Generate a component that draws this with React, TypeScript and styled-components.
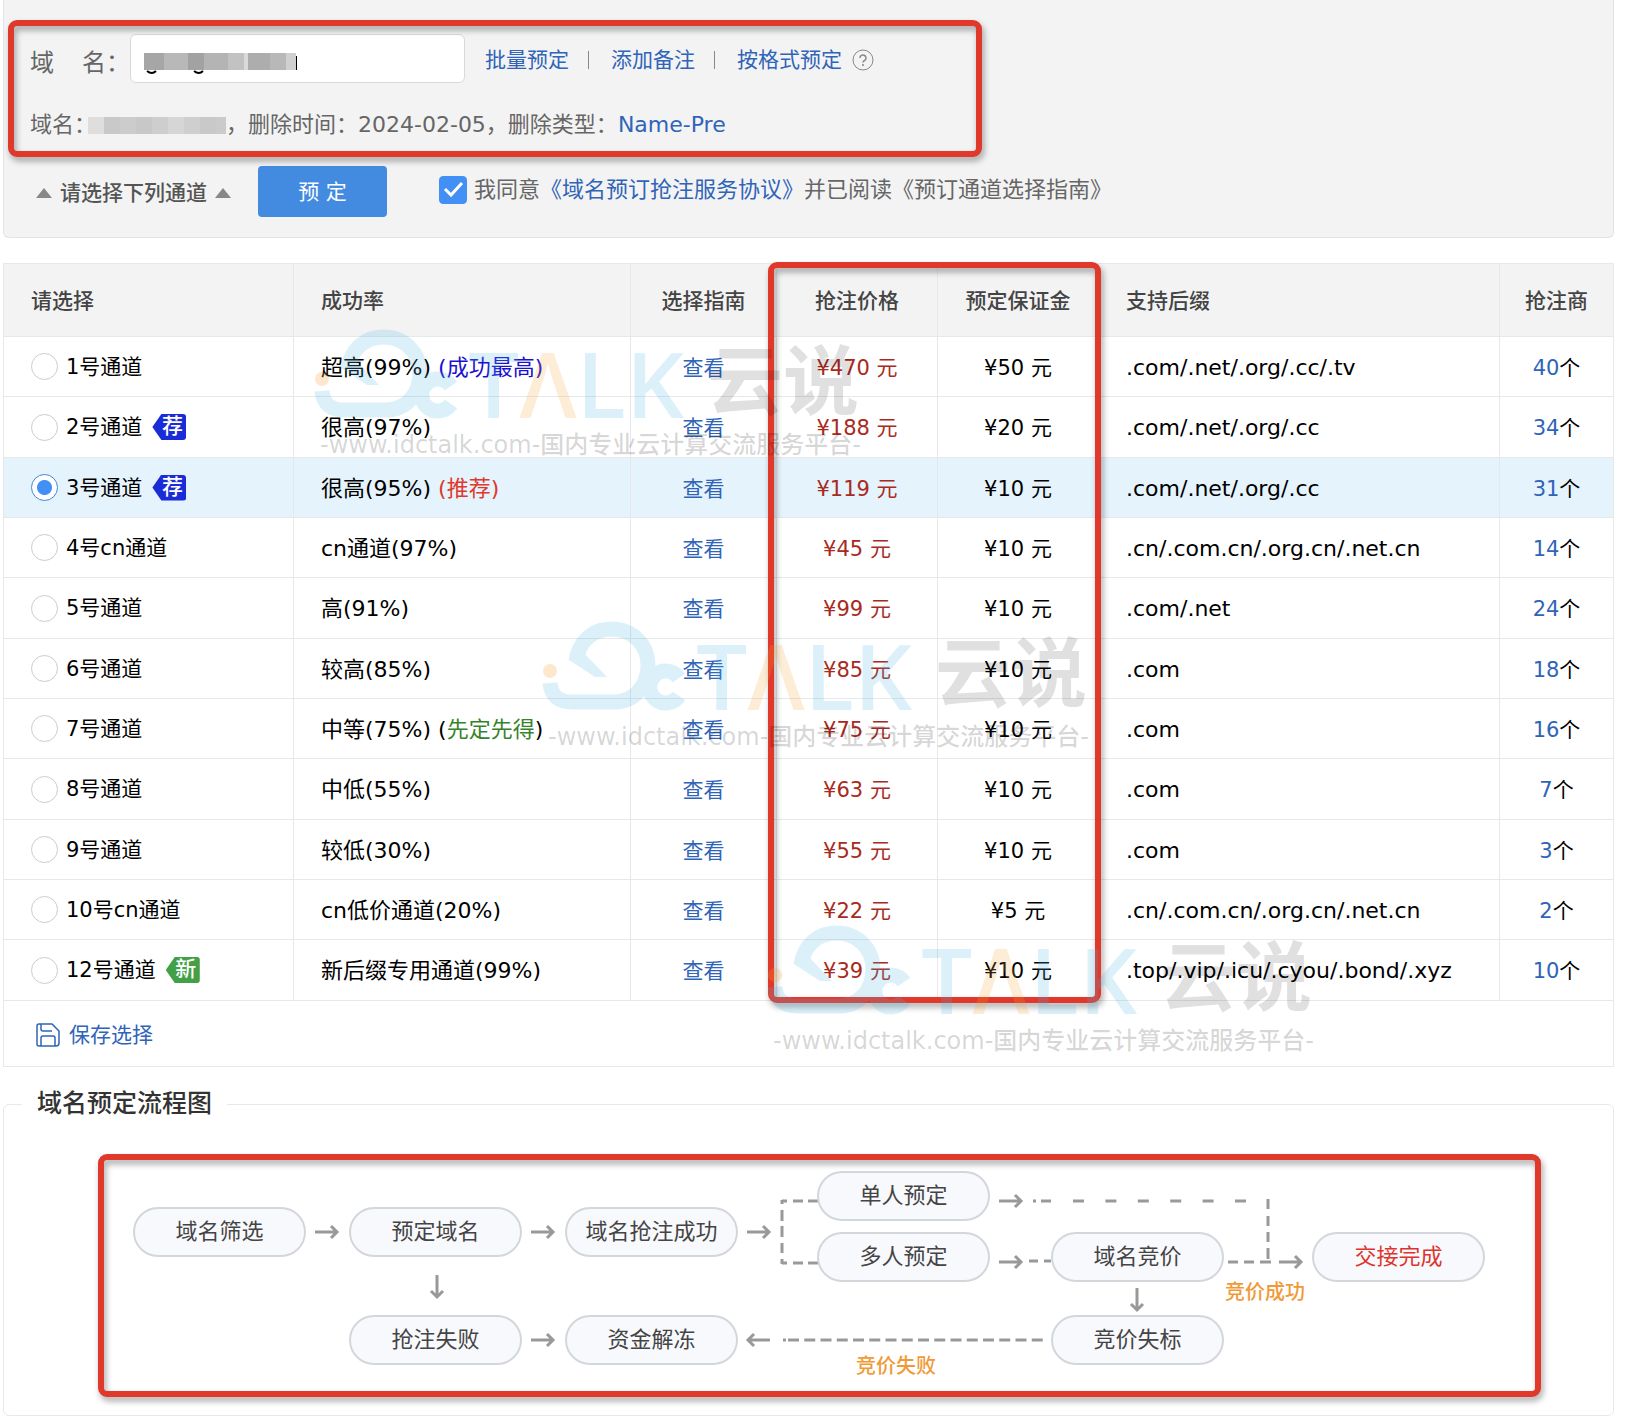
import React, { useState } from "react";
import styled, { createGlobalStyle, css } from "styled-components";

const GlobalStyle = createGlobalStyle`
  * { box-sizing: border-box; }
  body {
    margin: 0;
    background: #fff;
    color: #000;
    font-family: "DejaVu Sans", "Noto Sans CJK SC", sans-serif;
    font-size: 21px;
    line-height: 32px;
  }
`;

const Page = styled.main`
  position: relative;
  padding: 0 12px 10px 3px;
  min-width: 1400px;
  overflow: hidden;
`;

const Link = styled.a`
  color: #2f64b8;
  text-decoration: none;
`;

/* red marker frame laid over a part of the page */
const Frame = styled.div<{ $left: number; $top: number; $width: number; $height: number }>`
  position: absolute;
  left: ${(p) => p.$left}px;
  top: ${(p) => p.$top}px;
  width: ${(p) => p.$width}px;
  height: ${(p) => p.$height}px;
  border: 6px solid #e0382b;
  border-radius: 9px;
  filter: drop-shadow(2px 4px 3px rgba(0, 0, 0, 0.35));
  pointer-events: none;
`;

/* ---------- order form ---------- */

const OrderForm = styled.form`
  position: relative;
  padding: 34px 26px 20px;
  background: #f3f3f3;
  border: 1px solid #e3e3e3;
  border-top: 0;
  border-radius: 0 0 6px 6px;
  color: #666;
`;

const DomainRow = styled.div`
  display: flex;
  align-items: center;
`;

const DomainLabel = styled.label`
  display: flex;
  gap: 28px;
  font-size: 24px;
  padding-top: 8px;
`;

const InputBox = styled.div`
  position: relative;
  width: 335px;
  height: 49px;
`;

const DomainInput = styled.input`
  width: 100%;
  height: 100%;
  padding: 0 14px;
  border: 1px solid #d9d9d9;
  border-radius: 6px;
  background: #fff;
  font: inherit;
`;

const InputMosaic = styled.svg`
  position: absolute;
  left: 14px;
  top: 18px;
`;

const FormLinks = styled.nav`
  display: flex;
  align-items: center;
  margin-left: 20px;
  padding-top: 2px;
`;

const Divider = styled.span`
  width: 1px;
  height: 18px;
  margin: 0 18px 0 19px;
  background: #888;
  & + a { margin-left: 4px; }
`;

const HelpButton = styled.button`
  display: flex;
  margin-left: 10px;
  padding: 0;
  border: 0;
  background: none;
  cursor: pointer;
`;

const InfoRow = styled.p`
  display: flex;
  align-items: center;
  margin: 26px 0 25px;
  font-size: 22px;
`;

const InfoMosaic = styled.svg`
  margin-left: -8px;
`;

const ActionRow = styled.div`
  display: flex;
  align-items: center;
`;

const Hint = styled.span`
  display: flex;
  align-items: center;
  gap: 8px;
  width: 228px;
  padding: 3px 0 0 6px;
  font-weight: 500;
  color: #555;
`;

const Triangle = styled.i`
  border: 8px solid transparent;
  border-top: 0;
  border-bottom: 10px solid #888;
`;

const SubmitButton = styled.button`
  width: 129px;
  height: 51px;
  border: 0;
  border-radius: 4px;
  background: #428be0;
  color: #fff;
  font: inherit;
  cursor: pointer;
`;

const Agreement = styled.div`
  display: flex;
  align-items: center;
  gap: 7px;
  margin-left: 52px;
  padding-bottom: 4px;
  font-size: 22px;
`;

const CheckInput = styled.input`
  appearance: none;
  width: 28px;
  height: 28px;
  margin: 0;
  border: 1px solid #bbb;
  border-radius: 4px;
  background: #fff;
  &:checked {
    border-color: #428ff5;
    background: #428ff5;
  }
`;

const CheckBox = styled.span`
  position: relative;
  display: flex;
  svg {
    position: absolute;
    inset: 0;
    pointer-events: none;
  }
`;

/* ---------- channel table ---------- */

const TableWrap = styled.section`
  position: relative;
  margin-top: 25px;
`;

const Table = styled.table`
  width: 100%;
  table-layout: fixed;
  border-collapse: collapse;
`;

const Col = styled.col<{ $width?: number }>`
  width: ${(p) => (p.$width ? `${p.$width}px` : "auto")};
`;

const cell = css<{ $center?: boolean; $large?: boolean }>`
  padding: 2px 0 0 ${(p) => (p.$center ? 0 : 27)}px;
  border: 1px solid #e6e8ea;
  text-align: ${(p) => (p.$center ? "center" : "left")};
  white-space: nowrap;
  font-size: ${(p) => (p.$large ? 22 : 21)}px;
`;

const HeadCell = styled.th`
  ${cell}
  height: 73px;
  background: #f3f3f3;
  color: #444;
  font-weight: 500;
`;

const Cell = styled.td`
  ${cell}
`;

const ChannelCell = styled.td`
  ${cell}
  padding-top: 0;
`;

const Row = styled.tr<{ $selected?: boolean }>`
  height: 60px;
  background: ${(p) => (p.$selected ? "#e5f3fd" : "transparent")};
  &:nth-child(3n + 2) { height: 61px; }
`;

const FootCell = styled.td`
  height: 66px;
  padding: 2px 0 0 32px;
  border: 1px solid #e6e8ea;
`;

const ChannelLabel = styled.label`
  display: flex;
  align-items: center;
  gap: 8px;
`;

const RadioInput = styled.input`
  appearance: none;
  width: 27px;
  height: 27px;
  margin: 0;
  border: 1px solid #ccc;
  border-radius: 50%;
  background: #fff;
  &:checked {
    border-color: #3f86d8;
    background: radial-gradient(circle, #428ff5 7px, #fff 8px);
  }
`;

const Badge = styled.span<{ $color: string }>`
  width: 34px;
  height: 26px;
  margin-left: 2px;
  padding-left: 6px;
  border-radius: 3px;
  background: ${(p) => p.$color};
  clip-path: polygon(0 50%, 9px 0, 100% 0, 100% 100%, 9px 100%);
  color: #fff;
  font-size: 21px;
  font-weight: 500;
  line-height: 25px;
  text-align: center;
`;

const Tone = styled.span<{ $color: string }>`
  color: ${(p) => p.$color};
`;

const SaveButton = styled.button`
  display: flex;
  align-items: center;
  gap: 9px;
  padding: 0;
  border: 0;
  background: none;
  color: #2f64b8;
  font: inherit;
  cursor: pointer;
`;

/* ---------- flow chart ---------- */

const FlowBox = styled.fieldset`
  margin: 21px 0 0;
  padding: 34px 0 18px 94px;
  border: 1px solid #e6e8ea;
  border-radius: 6px;
`;

const FlowTitle = styled.legend`
  margin-left: -76px;
  padding: 0 15px;
  color: #333;
  font-size: 25px;
  font-weight: 500;
`;

const Canvas = styled.div`
  position: relative;
  width: 1443px;
  height: 243px;
`;

const Lines = styled.svg`
  position: absolute;
  inset: 0;
`;

const Node = styled.div<{ $x: number; $y: number; $color?: string }>`
  position: absolute;
  left: ${(p) => p.$x}px;
  top: ${(p) => p.$y}px;
  width: 173px;
  height: 50px;
  border: 2px solid #d3d7dc;
  border-radius: 25px;
  background: #f8f9fc;
  color: ${(p) => p.$color ?? "#444"};
  font-size: 22px;
  line-height: 46px;
  text-align: center;
`;

const Note = styled.span<{ $x: number; $y: number }>`
  position: absolute;
  left: ${(p) => p.$x}px;
  top: ${(p) => p.$y}px;
  color: #f09a37;
  font-size: 20px;
  font-weight: 500;
`;

/* ---------- watermark ---------- */

const Mark = styled.div<{ $x: number; $y: number }>`
  position: absolute;
  left: ${(p) => p.$x}px;
  top: ${(p) => p.$y}px;
  pointer-events: none;
  white-space: nowrap;
`;

const MarkLogo = styled.div`
  display: flex;
  height: 90px;
  line-height: 108px;
`;

const MarkLatin = styled.span`
  width: 239px;
  margin-left: 10px;
  color: rgba(80, 182, 228, 0.2);
  font-family: "Open Sans", sans-serif;
  font-size: 91px;
  font-weight: 600;
`;

const MarkPeach = styled.span`
  color: rgba(247, 160, 50, 0.2);
`;

const MarkHan = styled.span`
  color: rgba(0, 0, 0, 0.12);
  font-size: 76px;
  font-weight: 700;
`;

const MarkTag = styled.div`
  margin: 10px 0 0 6px;
  color: rgba(0, 0, 0, 0.17);
  font-size: 24px;
  font-weight: 500;
`;

type Channel = {
  name: string;
  badge?: "荐" | "新";
  rate: string;
  note?: React.ReactNode;
  price: number;
  deposit: number;
  suffix: string;
  vendors: number;
};

const CHANNELS: Channel[] = [
  { name: "1号通道", rate: "超高(99%)", note: <Tone $color="#1a10d0">(成功最高)</Tone>, price: 470, deposit: 50, suffix: ".com/.net/.org/.cc/.tv", vendors: 40 },
  { name: "2号通道", badge: "荐", rate: "很高(97%)", price: 188, deposit: 20, suffix: ".com/.net/.org/.cc", vendors: 34 },
  { name: "3号通道", badge: "荐", rate: "很高(95%)", note: <Tone $color="#e0382b">(推荐)</Tone>, price: 119, deposit: 10, suffix: ".com/.net/.org/.cc", vendors: 31 },
  { name: "4号cn通道", rate: "cn通道(97%)", price: 45, deposit: 10, suffix: ".cn/.com.cn/.org.cn/.net.cn", vendors: 14 },
  { name: "5号通道", rate: "高(91%)", price: 99, deposit: 10, suffix: ".com/.net", vendors: 24 },
  { name: "6号通道", rate: "较高(85%)", price: 85, deposit: 10, suffix: ".com", vendors: 18 },
  { name: "7号通道", rate: "中等(75%)", note: <>(<Tone $color="#35832a">先定先得</Tone>)</>, price: 75, deposit: 10, suffix: ".com", vendors: 16 },
  { name: "8号通道", rate: "中低(55%)", price: 63, deposit: 10, suffix: ".com", vendors: 7 },
  { name: "9号通道", rate: "较低(30%)", price: 55, deposit: 10, suffix: ".com", vendors: 3 },
  { name: "10号cn通道", rate: "cn低价通道(20%)", price: 22, deposit: 5, suffix: ".cn/.com.cn/.org.cn/.net.cn", vendors: 2 },
  { name: "12号通道", badge: "新", rate: "新后缀专用通道(99%)", price: 39, deposit: 10, suffix: ".top/.vip/.icu/.cyou/.bond/.xyz", vendors: 10 },
];

const NODES: { text: string; x: number; y: number; color?: string }[] = [
  { text: "域名筛选", x: 35, y: 53 },
  { text: "预定域名", x: 251, y: 53 },
  { text: "域名抢注成功", x: 467, y: 53 },
  { text: "单人预定", x: 719, y: 17 },
  { text: "多人预定", x: 719, y: 78 },
  { text: "域名竞价", x: 953, y: 78 },
  { text: "交接完成", x: 1214, y: 78, color: "#dd352c" },
  { text: "抢注失败", x: 251, y: 161 },
  { text: "资金解冻", x: 467, y: 161 },
  { text: "竞价失标", x: 953, y: 161 },
];

const ARROWS: [number, number, number][] = [
  [217, 78, 0],
  [433, 78, 0],
  [649, 78, 0],
  [339, 121, 90],
  [433, 186, 0],
  [672, 186, 180],
  [901, 47, 0],
  [901, 108, 0],
  [1039, 134, 90],
  [1181, 108, 0],
];

const INFO_MOSAIC = ["#dedede", "#c9c9c9", "#cccccc", "#c8c8c8", "#cecece", "#d6d6d6", "#cfcfcf", "#c9c9c9", "#cbcbcb"];
const INPUT_MOSAIC: [number, number, string][] = [
  [0, 20, "#a6a6a6"],
  [20, 24, "#b8b8b8"],
  [44, 16, "#a2a2a2"],
  [60, 24, "#b4b4b4"],
  [84, 16, "#c2c2c2"],
  [100, 4, "#dadada"],
  [104, 22, "#adadad"],
  [126, 16, "#b8b8b8"],
  [142, 10, "#d0d0d0"],
];

function Watermark({ x, y }: { x: number; y: number }) {
  return (
    <Mark $x={x} $y={y} aria-hidden="true">
      <MarkLogo>
        <svg width="144" height="90" viewBox="0 0 144 90" fill="none">
          <circle cx="8" cy="50" r="7" fill="#f7a032" opacity="0.24" />
          <g opacity="0.2" stroke="#50b6e4" strokeWidth="15">
            <path d="M34 40C37 20 51 8 69 8c22 0 37 16 37 36 0 21-14 37-34 37H30C16 81 9 74 8 62" />
            <path d="M137 57a16 16 0 1 0 0 18" />
            <path d="M27 39l13-9 25 26H53z" fill="#50b6e4" stroke="none" />
          </g>
        </svg>
        <MarkLatin>
          T<MarkPeach>Λ</MarkPeach>LK
        </MarkLatin>
        <MarkHan>云说</MarkHan>
      </MarkLogo>
      <MarkTag>-www.idctalk.com-国内专业云计算交流服务平台-</MarkTag>
    </Mark>
  );
}

export default function App() {
  const [selected, setSelected] = useState(2);
  const [agreed, setAgreed] = useState(true);

  return (
    <Page>
      <GlobalStyle />
      <OrderForm onSubmit={(e) => e.preventDefault()}>
        <DomainRow>
          <DomainLabel htmlFor="domain">
            <span>域</span>
            <span>名：</span>
          </DomainLabel>
          <InputBox>
            <DomainInput id="domain" type="text" />
            <InputMosaic width="154" height="24" aria-hidden="true">
              <g fill="none" stroke="#000" strokeWidth="2">
                <path d="M3 19q5 4 9 0" />
                <path d="M50 19q5 4 9 0" />
                <path d="M152 4v14" />
              </g>
              {INPUT_MOSAIC.map(([x, w, fill]) => (
                <rect key={x} x={x} y="1" width={w} height="17" fill={fill} />
              ))}
            </InputMosaic>
          </InputBox>
          <FormLinks>
            <Link href="#batch">批量预定</Link>
            <Divider />
            <Link href="#remark">添加备注</Link>
            <Divider />
            <Link href="#format">按格式预定</Link>
            <HelpButton type="button" aria-label="帮助">
              <svg width="22" height="22" viewBox="0 0 22 22" fill="none" stroke="#888">
                <circle cx="11" cy="11" r="10" />
                <path d="M8 9a3 3 0 1 1 5 2.200Q11 12 11 13.500M11 15v2" strokeWidth="1.500" />
              </svg>
            </HelpButton>
          </FormLinks>
        </DomainRow>
        <InfoRow>
          域名：
          <InfoMosaic width="138" height="20" aria-hidden="true">
            {INFO_MOSAIC.map((fill, i) => (
              <rect key={i} x={i * 16} y="2" width="16" height="17" fill={fill} />
            ))}
          </InfoMosaic>
          ，删除时间：2024-02-05，删除类型：<Link href="#type">Name-Pre</Link>
        </InfoRow>
        <ActionRow>
          <Hint>
            <Triangle />
            请选择下列通道
            <Triangle />
          </Hint>
          <SubmitButton type="submit">预 定</SubmitButton>
          <Agreement>
            <CheckBox>
              <CheckInput id="agree" type="checkbox" checked={agreed} onChange={(e) => setAgreed(e.target.checked)} />
              <svg width="28" height="28" viewBox="0 0 28 28" fill="none" stroke="#fff" strokeWidth="3">
                <path d="M6 13l6 6L23 7" />
              </svg>
            </CheckBox>
            <label htmlFor="agree">
              我同意<Link href="#agreement">《域名预订抢注服务协议》</Link>并已阅读《预订通道选择指南》
            </label>
          </Agreement>
        </ActionRow>
        <Frame $left={4} $top={20} $width={974} $height={137} />
      </OrderForm>

      <TableWrap>
        <Table>
          <colgroup>
            <Col $width={290} />
            <Col $width={337} />
            <Col $width={146} />
            <Col $width={161} />
            <Col $width={161} />
            <Col />
            <Col $width={114} />
          </colgroup>
          <thead>
            <tr>
              <HeadCell>请选择</HeadCell>
              <HeadCell>成功率</HeadCell>
              <HeadCell $center>选择指南</HeadCell>
              <HeadCell $center>抢注价格</HeadCell>
              <HeadCell $center>预定保证金</HeadCell>
              <HeadCell>支持后缀</HeadCell>
              <HeadCell $center>抢注商</HeadCell>
            </tr>
          </thead>
          <tbody>
            {CHANNELS.map((c, i) => (
              <Row key={c.name} $selected={i === selected}>
                <ChannelCell>
                  <ChannelLabel>
                    <RadioInput type="radio" name="channel" checked={i === selected} onChange={() => setSelected(i)} />
                    {c.name}
                    {c.badge && <Badge $color={c.badge === "荐" ? "#1a2bd8" : "#43a047"}>{c.badge}</Badge>}
                  </ChannelLabel>
                </ChannelCell>
                <Cell $large>
                  {c.rate} {c.note}
                </Cell>
                <Cell $center>
                  <Link href="#guide">查看</Link>
                </Cell>
                <Cell $center>
                  <Tone $color="#a82a20">¥{c.price} 元</Tone>
                </Cell>
                <Cell $center>¥{c.deposit} 元</Cell>
                <Cell $large>{c.suffix}</Cell>
                <Cell $center>
                  <Link href="#vendors">{c.vendors}</Link>个
                </Cell>
              </Row>
            ))}
          </tbody>
          <tfoot>
            <tr>
              <FootCell colSpan={7}>
                <SaveButton type="button">
                  <svg width="24" height="24" viewBox="0 0 24 24" fill="none" stroke="#2f64b8" strokeWidth="1.500">
                    <path d="M3 1h13l7 7v12a3 3 0 0 1-3 3H3a2 2 0 0 1-2-2V3a2 2 0 0 1 2-2z" />
                    <path d="M5 1v5q0 2 2 2h9M5 23v-8q0-2 2-2h10q2 0 2 2v8" />
                  </svg>
                  保存选择
                </SaveButton>
              </FootCell>
            </tr>
          </tfoot>
        </Table>
        <Frame $left={765} $top={-1} $width={333} $height={741} />
      </TableWrap>

      <FlowBox>
        <FlowTitle>域名预定流程图</FlowTitle>
        <Canvas>
          <Lines width="1443" height="243" viewBox="0 0 1443 243" fill="none" stroke="#999" strokeWidth="3">
            {ARROWS.map(([x, y, turn]) => (
              <path key={`${x}-${y}`} transform={`translate(${x} ${y}) rotate(${turn})`} d="M0 0H22M16 -6L22 0L16 6" />
            ))}
            <path d="M684 47h5M695 47h10M710 47h10M684 109h5M695 109h10M710 109h10" />
            <path d="M684 46v4M684 56v11M684 72v11M684 89v10M684 105v5" />
            <path d="M935 47h3M943 47h10" />
            <path d="M975 47H1150" strokeDasharray="11 21.400" />
            <path d="M1170 45v10M1170 62v10M1170 78v10M1170 94v11" />
            <path d="M1130 108h10M1146 108h10M1162 108h11" />
            <path d="M931 107h9M946 107h7" />
            <path d="M685 186h3" />
            <path d="M690 186H945" strokeDasharray="11 5.250" />
          </Lines>
          {NODES.map((n) => (
            <Node key={n.text} $x={n.x} $y={n.y} $color={n.color}>
              {n.text}
            </Node>
          ))}
          <Note $x={1127} $y={122}>竞价成功</Note>
          <Note $x={758} $y={196}>竞价失败</Note>
          <Frame $left={0} $top={0} $width={1443} $height={243} />
        </Canvas>
      </FlowBox>

      <Watermark x={314} y={329} />
      <Watermark x={542} y={621} />
      <Watermark x={767} y={925} />
    </Page>
  );
}
